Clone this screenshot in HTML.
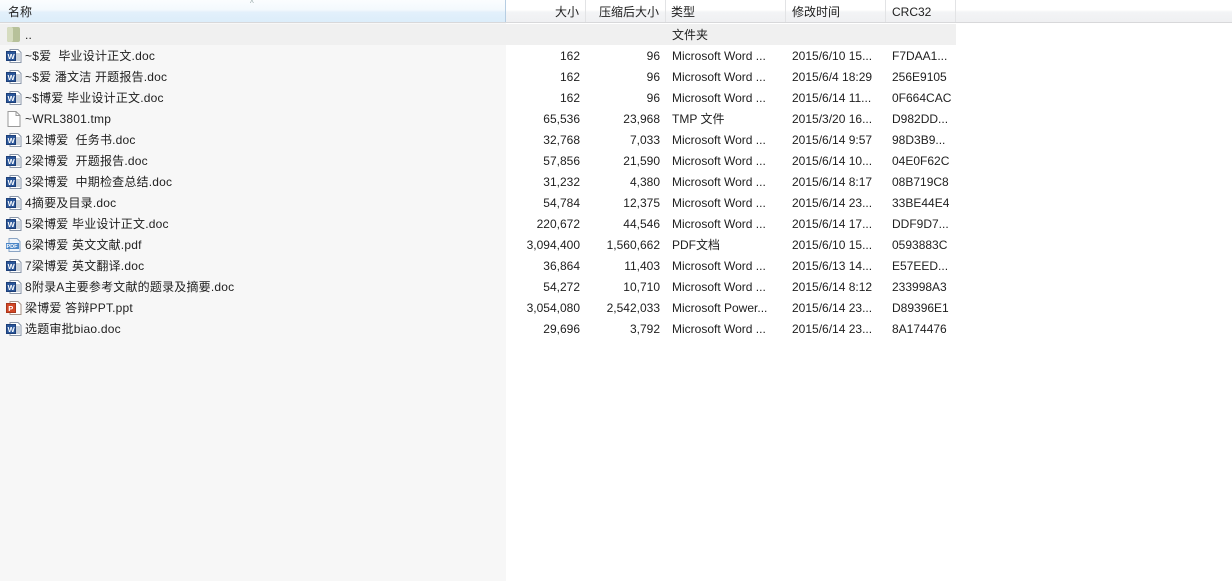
<!DOCTYPE html>
<html><head><meta charset="utf-8"><style>
*{margin:0;padding:0;box-sizing:border-box}
body{width:1232px;height:581px;overflow:hidden;background:#fff;font-family:"Liberation Sans","Noto Sans CJK SC",sans-serif;font-size:12px;color:#1e1e1e;position:relative}
.namebg{position:absolute;left:0;top:23px;width:506px;height:558px;background:#f7f7f7}
.hdr{position:absolute;left:0;top:0;width:1232px;height:23px;background:linear-gradient(#fff 0,#fff 45%,#f3f4f6 55%,#eff0f2 100%);border-bottom:1px solid #d8d8da}
.hc{position:absolute;top:0;height:22px;line-height:24px;border-right:1px solid #e2e3e5}
.hc.name{background:linear-gradient(#fbfdfe 0,#f3f9fd 45%,#e3f0fb 55%,#dcedfa 100%);border-right:1px solid #b6cde2}
.arrow{position:absolute;left:250px;top:0;font-size:8px;color:#9aa;line-height:8px}
.row{position:absolute;left:0;width:956px;height:21px;line-height:23px;white-space:nowrap}
.row.up{background:#f0f0f0;line-height:22px}
.c{position:absolute;top:0;height:21px;overflow:hidden}
.n{left:25px;letter-spacing:0.2px}
.s{left:506px;width:74px;text-align:right}
.z{left:586px;width:74px;text-align:right}
.t{left:672px}
.m{left:792px}
.k{left:892px}
.ic{position:absolute;left:6px;top:3px;width:17px;height:16px}
</style></head><body>
<div class="namebg"></div>
<div class="hdr">
<div class="hc name" style="left:0;width:506px;padding-left:8px">名称</div>
<div class="arrow">^</div>
<div class="hc" style="left:506px;width:80px;text-align:right;padding-right:6px">大小</div>
<div class="hc" style="left:586px;width:80px;text-align:right;padding-right:6px">压缩后大小</div>
<div class="hc" style="left:666px;width:120px;padding-left:5px">类型</div>
<div class="hc" style="left:786px;width:100px;padding-left:6px">修改时间</div>
<div class="hc" style="left:886px;width:70px;padding-left:6px">CRC32</div>
</div>

<svg width="0" height="0" style="position:absolute"><defs>
<g id="w"><path d="M4 1.5h8l3 3v10H4z" fill="#fff" stroke="#8a96a8"/><path d="M10 6h4M10 8h4M10 10h4M10 12h4" stroke="#9aa7ba"/><rect x="0.5" y="3.5" width="9" height="9" fill="#2b579a" stroke="#1d3f78"/><text x="1.6" y="11" font-size="7.5" font-weight="bold" fill="#fff" font-family="Liberation Sans">W</text></g>
<g id="p"><path d="M4 1.5h8l3 3v10H4z" fill="#fff" stroke="#a8958a"/><rect x="0.5" y="3.5" width="9" height="9" fill="#d24726" stroke="#a8361b"/><text x="2.3" y="11" font-size="7.5" font-weight="bold" fill="#fff" font-family="Liberation Sans">P</text></g>
<g id="f"><path d="M2 0.5h8l4 4v11H2z" fill="#fff" stroke="#9a9a9a"/><path d="M10 0.5v4h4" fill="none" stroke="#9a9a9a"/></g>
<g id="pdf"><path d="M3 1.5h8l3 3v10H3z" fill="#eef4fb" stroke="#8aa4c4"/><rect x="0" y="6" width="13" height="6" fill="#4a86c8"/><text x="0.5" y="11.2" font-size="5.5" font-weight="bold" fill="#fff" font-family="Liberation Sans">PDF</text></g>
<g id="d"><rect x="1" y="0" width="13" height="15" rx="2" fill="#b7c19a"/><rect x="1" y="0" width="6" height="15" rx="2" fill="#d6dcc0"/></g>
</defs></svg>

<div class="row up" style="top:24px"><svg class="ic"><use href="#d"/></svg><span class="c n">..</span><span class="c t">文件夹</span></div>
<div class="row" style="top:45px"><svg class="ic"><use href="#w"/></svg><span class="c n">~$爱&nbsp; 毕业设计正文.doc</span><span class="c s">162</span><span class="c z">96</span><span class="c t">Microsoft Word ...</span><span class="c m">2015/6/10 15...</span><span class="c k">F7DAA1...</span></div>
<div class="row" style="top:66px"><svg class="ic"><use href="#w"/></svg><span class="c n">~$爱 潘文洁 开题报告.doc</span><span class="c s">162</span><span class="c z">96</span><span class="c t">Microsoft Word ...</span><span class="c m">2015/6/4 18:29</span><span class="c k">256E9105</span></div>
<div class="row" style="top:87px"><svg class="ic"><use href="#w"/></svg><span class="c n">~$博爱 毕业设计正文.doc</span><span class="c s">162</span><span class="c z">96</span><span class="c t">Microsoft Word ...</span><span class="c m">2015/6/14 11...</span><span class="c k">0F664CAC</span></div>
<div class="row" style="top:108px"><svg class="ic"><use href="#f"/></svg><span class="c n">~WRL3801.tmp</span><span class="c s">65,536</span><span class="c z">23,968</span><span class="c t">TMP 文件</span><span class="c m">2015/3/20 16...</span><span class="c k">D982DD...</span></div>
<div class="row" style="top:129px"><svg class="ic"><use href="#w"/></svg><span class="c n">1梁博爱&nbsp; 任务书.doc</span><span class="c s">32,768</span><span class="c z">7,033</span><span class="c t">Microsoft Word ...</span><span class="c m">2015/6/14 9:57</span><span class="c k">98D3B9...</span></div>
<div class="row" style="top:150px"><svg class="ic"><use href="#w"/></svg><span class="c n">2梁博爱&nbsp; 开题报告.doc</span><span class="c s">57,856</span><span class="c z">21,590</span><span class="c t">Microsoft Word ...</span><span class="c m">2015/6/14 10...</span><span class="c k">04E0F62C</span></div>
<div class="row" style="top:171px"><svg class="ic"><use href="#w"/></svg><span class="c n">3梁博爱&nbsp; 中期检查总结.doc</span><span class="c s">31,232</span><span class="c z">4,380</span><span class="c t">Microsoft Word ...</span><span class="c m">2015/6/14 8:17</span><span class="c k">08B719C8</span></div>
<div class="row" style="top:192px"><svg class="ic"><use href="#w"/></svg><span class="c n">4摘要及目录.doc</span><span class="c s">54,784</span><span class="c z">12,375</span><span class="c t">Microsoft Word ...</span><span class="c m">2015/6/14 23...</span><span class="c k">33BE44E4</span></div>
<div class="row" style="top:213px"><svg class="ic"><use href="#w"/></svg><span class="c n">5梁博爱 毕业设计正文.doc</span><span class="c s">220,672</span><span class="c z">44,546</span><span class="c t">Microsoft Word ...</span><span class="c m">2015/6/14 17...</span><span class="c k">DDF9D7...</span></div>
<div class="row" style="top:234px"><svg class="ic"><use href="#pdf"/></svg><span class="c n">6梁博爱 英文文献.pdf</span><span class="c s">3,094,400</span><span class="c z">1,560,662</span><span class="c t">PDF文档</span><span class="c m">2015/6/10 15...</span><span class="c k">0593883C</span></div>
<div class="row" style="top:255px"><svg class="ic"><use href="#w"/></svg><span class="c n">7梁博爱 英文翻译.doc</span><span class="c s">36,864</span><span class="c z">11,403</span><span class="c t">Microsoft Word ...</span><span class="c m">2015/6/13 14...</span><span class="c k">E57EED...</span></div>
<div class="row" style="top:276px"><svg class="ic"><use href="#w"/></svg><span class="c n">8附录A主要参考文献的题录及摘要.doc</span><span class="c s">54,272</span><span class="c z">10,710</span><span class="c t">Microsoft Word ...</span><span class="c m">2015/6/14 8:12</span><span class="c k">233998A3</span></div>
<div class="row" style="top:297px"><svg class="ic"><use href="#p"/></svg><span class="c n">梁博爱 答辩PPT.ppt</span><span class="c s">3,054,080</span><span class="c z">2,542,033</span><span class="c t">Microsoft Power...</span><span class="c m">2015/6/14 23...</span><span class="c k">D89396E1</span></div>
<div class="row" style="top:318px"><svg class="ic"><use href="#w"/></svg><span class="c n">选题审批biao.doc</span><span class="c s">29,696</span><span class="c z">3,792</span><span class="c t">Microsoft Word ...</span><span class="c m">2015/6/14 23...</span><span class="c k">8A174476</span></div>
</body></html>
